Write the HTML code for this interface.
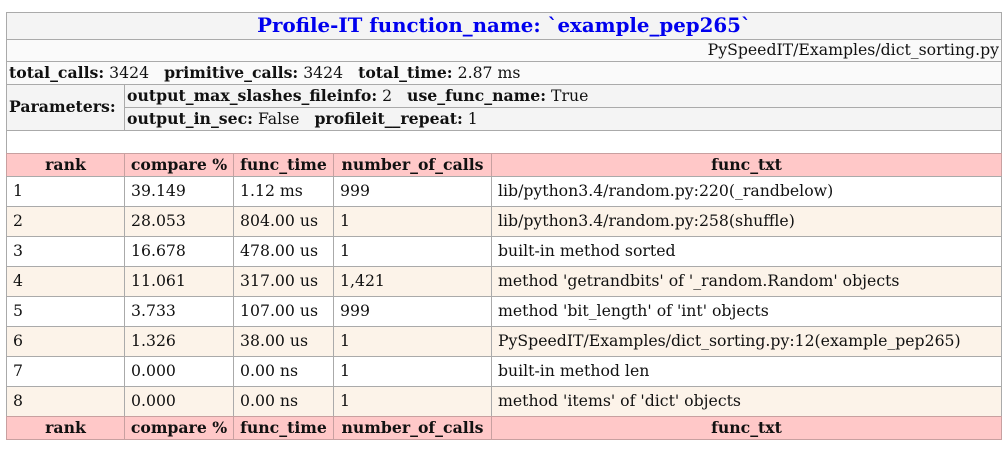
<!DOCTYPE html>
<html><head><meta charset="utf-8"><style>
body{margin:0;width:1006px;height:450px;background:#fff;position:relative;overflow:hidden;font-family:"DejaVu Serif","Liberation Serif",serif;font-size:15.7px;color:#111}
.c{position:absolute;box-sizing:border-box;border:1px solid #aaa;display:flex;align-items:center;white-space:nowrap;padding-left:6px;padding-bottom:2px}
.l{padding-left:2px}
.ctr{justify-content:center;padding-left:0}
.h{background:#ffc8c8;font-weight:bold;border-color:#c8a0a0}
.t{background:#fcf3e9}
b{font-weight:bold}
</style></head><body>
<div class="c ctr" style="left:6px;top:12px;width:996px;height:28px;background:#f4f4f4;color:#0000ee;font-weight:bold;font-size:19.8px">Profile-IT function_name: `example_pep265`</div>
<div class="c" style="left:6px;top:39px;width:996px;height:23px;background:#fafafa;justify-content:flex-end;padding-right:2px">PySpeedIT/Examples/dict_sorting.py</div>
<div class="c l" style="left:6px;top:61px;width:996px;height:24px;background:#fafafa"><b>total_calls:</b>&nbsp;3424&nbsp;&nbsp;&nbsp;<b>primitive_calls:</b>&nbsp;3424&nbsp;&nbsp;&nbsp;<b>total_time:</b>&nbsp;2.87 ms</div>
<div class="c l" style="left:6px;top:84px;width:119px;height:47px;background:#f4f4f4"><b>Parameters:</b></div>
<div class="c l" style="left:124px;top:84px;width:878px;height:24px;background:#f4f4f4"><b>output_max_slashes_fileinfo:</b>&nbsp;2&nbsp;&nbsp;&nbsp;<b>use_func_name:</b>&nbsp;True</div>
<div class="c l" style="left:124px;top:107px;width:878px;height:24px;background:#f4f4f4"><b>output_in_sec:</b>&nbsp;False&nbsp;&nbsp;&nbsp;<b>profileit__repeat:</b>&nbsp;1</div>
<div class="c" style="left:6px;top:130px;width:996px;height:24px;background:#fff"></div>

<div class="c h ctr" style="left:6px;top:153px;width:119px;height:24px">rank</div>
<div class="c h ctr" style="left:124px;top:153px;width:110px;height:24px">compare %</div>
<div class="c h ctr" style="left:233px;top:153px;width:101px;height:24px">func_time</div>
<div class="c h ctr" style="left:333px;top:153px;width:159px;height:24px">number_of_calls</div>
<div class="c h ctr" style="left:491px;top:153px;width:511px;height:24px">func_txt</div>

<div class="c" style="left:6px;top:176px;width:119px;height:31px">1</div><div class="c" style="left:124px;top:176px;width:110px;height:31px">39.149</div><div class="c" style="left:233px;top:176px;width:101px;height:31px">1.12 ms</div><div class="c" style="left:333px;top:176px;width:159px;height:31px">999</div><div class="c" style="left:491px;top:176px;width:511px;height:31px">lib/python3.4/random.py:220(_randbelow)</div>

<div class="c t" style="left:6px;top:206px;width:119px;height:31px">2</div><div class="c t" style="left:124px;top:206px;width:110px;height:31px">28.053</div><div class="c t" style="left:233px;top:206px;width:101px;height:31px">804.00 us</div><div class="c t" style="left:333px;top:206px;width:159px;height:31px">1</div><div class="c t" style="left:491px;top:206px;width:511px;height:31px">lib/python3.4/random.py:258(shuffle)</div>

<div class="c" style="left:6px;top:236px;width:119px;height:31px">3</div><div class="c" style="left:124px;top:236px;width:110px;height:31px">16.678</div><div class="c" style="left:233px;top:236px;width:101px;height:31px">478.00 us</div><div class="c" style="left:333px;top:236px;width:159px;height:31px">1</div><div class="c" style="left:491px;top:236px;width:511px;height:31px">built-in method sorted</div>

<div class="c t" style="left:6px;top:266px;width:119px;height:31px">4</div><div class="c t" style="left:124px;top:266px;width:110px;height:31px">11.061</div><div class="c t" style="left:233px;top:266px;width:101px;height:31px">317.00 us</div><div class="c t" style="left:333px;top:266px;width:159px;height:31px">1,421</div><div class="c t" style="left:491px;top:266px;width:511px;height:31px">method 'getrandbits' of '_random.Random' objects</div>

<div class="c" style="left:6px;top:296px;width:119px;height:31px">5</div><div class="c" style="left:124px;top:296px;width:110px;height:31px">3.733</div><div class="c" style="left:233px;top:296px;width:101px;height:31px">107.00 us</div><div class="c" style="left:333px;top:296px;width:159px;height:31px">999</div><div class="c" style="left:491px;top:296px;width:511px;height:31px">method 'bit_length' of 'int' objects</div>

<div class="c t" style="left:6px;top:326px;width:119px;height:31px">6</div><div class="c t" style="left:124px;top:326px;width:110px;height:31px">1.326</div><div class="c t" style="left:233px;top:326px;width:101px;height:31px">38.00 us</div><div class="c t" style="left:333px;top:326px;width:159px;height:31px">1</div><div class="c t" style="left:491px;top:326px;width:511px;height:31px">PySpeedIT/Examples/dict_sorting.py:12(example_pep265)</div>

<div class="c" style="left:6px;top:356px;width:119px;height:31px">7</div><div class="c" style="left:124px;top:356px;width:110px;height:31px">0.000</div><div class="c" style="left:233px;top:356px;width:101px;height:31px">0.00 ns</div><div class="c" style="left:333px;top:356px;width:159px;height:31px">1</div><div class="c" style="left:491px;top:356px;width:511px;height:31px">built-in method len</div>

<div class="c t" style="left:6px;top:386px;width:119px;height:31px">8</div><div class="c t" style="left:124px;top:386px;width:110px;height:31px">0.000</div><div class="c t" style="left:233px;top:386px;width:101px;height:31px">0.00 ns</div><div class="c t" style="left:333px;top:386px;width:159px;height:31px">1</div><div class="c t" style="left:491px;top:386px;width:511px;height:31px">method 'items' of 'dict' objects</div>

<div class="c h ctr" style="left:6px;top:416px;width:119px;height:24px">rank</div>
<div class="c h ctr" style="left:124px;top:416px;width:110px;height:24px">compare %</div>
<div class="c h ctr" style="left:233px;top:416px;width:101px;height:24px">func_time</div>
<div class="c h ctr" style="left:333px;top:416px;width:159px;height:24px">number_of_calls</div>
<div class="c h ctr" style="left:491px;top:416px;width:511px;height:24px">func_txt</div>
</body></html>
